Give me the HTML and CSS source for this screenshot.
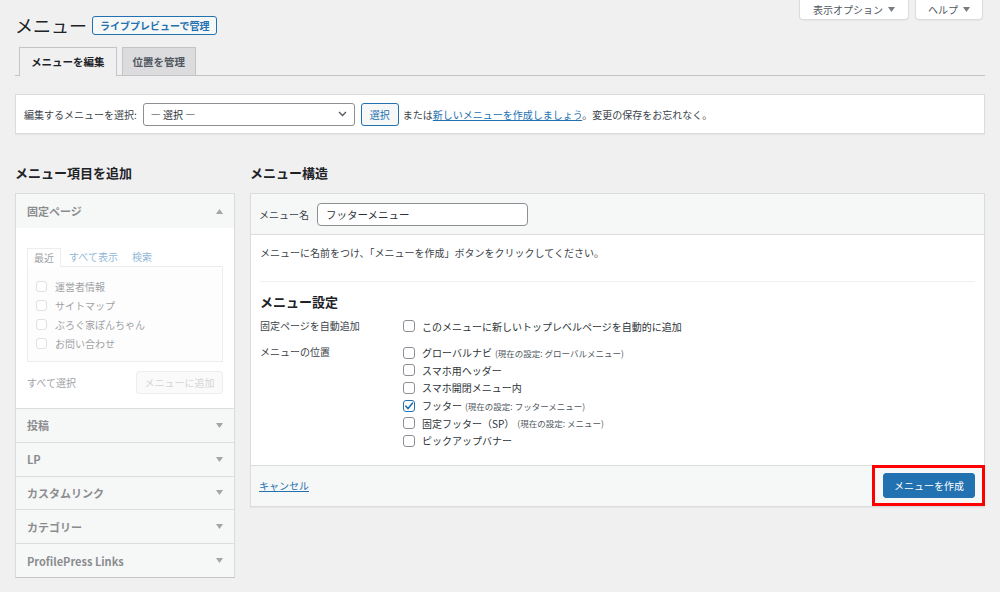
FILE: index.html
```html
<!DOCTYPE html>
<html lang="ja">
<head>
<meta charset="utf-8">
<title>メニュー</title>
<link rel="stylesheet" href="styles.css">
</head>
<body>
<div class="wrap">
  <div class="top">
    <div class="title-row">
      <h1 class="title">メニュー</h1>
      <a class="badge">ライブプレビューで管理</a>
    </div>
    <div class="meta">
      <button class="meta-btn">表示オプション <svg class="tri" width="7" height="5" viewBox="0 0 7 5"><polygon points="0,0 7,0 3.5,5"/></svg></button>
      <button class="meta-btn">ヘルプ <svg class="tri" width="7" height="5" viewBox="0 0 7 5"><polygon points="0,0 7,0 3.5,5"/></svg></button>
    </div>
  </div>

  <nav class="tabs">
    <a class="tab active">メニューを編集</a>
    <a class="tab">位置を管理</a>
  </nav>

  <div class="select-bar">
    <span class="sb-label">編集するメニューを選択:</span>
    <div class="select"><span>— 選択 —</span><svg width="9" height="6" viewBox="0 0 9 6"><path d="M1 1l3.5 3.5L8 1" fill="none" stroke="#50575e" stroke-width="1.3"/></svg></div>
    <button class="btn-sec">選択</button>
    <span class="sb-text">または<a class="link">新しいメニューを作成しましょう</a>。変更の保存をお忘れなく。</span>
  </div>

  <div class="columns">
    <div class="col-left">
      <h2 class="col-title">メニュー項目を追加</h2>
      <div class="acc">
        <div class="acc-head">
          <span class="faded acc-title">固定ページ</span>
          <svg class="faded arrow" width="7" height="5" viewBox="0 0 7 5"><polygon points="0,5 7,5 3.5,0"/></svg>
        </div>
        <div class="acc-body">
          <div class="faded">
            <div class="ptabs">
              <span class="ptab active">最近</span>
              <span class="ptab">すべて表示</span>
              <span class="ptab">検索</span>
            </div>
            <div class="plist">
              <div class="pitem"><span class="cb small"></span>運営者情報</div>
              <div class="pitem"><span class="cb small"></span>サイトマップ</div>
              <div class="pitem"><span class="cb small"></span>ぶろぐ家ぽんちゃん</div>
              <div class="pitem"><span class="cb small"></span>お問い合わせ</div>
            </div>
            <div class="add-row">
              <span class="sel-all">すべて選択</span>
              <button class="btn-add">メニューに追加</button>
            </div>
          </div>
        </div>
        <div class="acc-sec"><span class="faded acc-title">投稿</span><svg class="faded arrow" width="7" height="5" viewBox="0 0 7 5"><polygon points="0,0 7,0 3.5,5"/></svg></div>
        <div class="acc-sec"><span class="faded acc-title">LP</span><svg class="faded arrow" width="7" height="5" viewBox="0 0 7 5"><polygon points="0,0 7,0 3.5,5"/></svg></div>
        <div class="acc-sec"><span class="faded acc-title">カスタムリンク</span><svg class="faded arrow" width="7" height="5" viewBox="0 0 7 5"><polygon points="0,0 7,0 3.5,5"/></svg></div>
        <div class="acc-sec"><span class="faded acc-title">カテゴリー</span><svg class="faded arrow" width="7" height="5" viewBox="0 0 7 5"><polygon points="0,0 7,0 3.5,5"/></svg></div>
        <div class="acc-sec"><span class="faded acc-title">ProfilePress Links</span><svg class="faded arrow" width="7" height="5" viewBox="0 0 7 5"><polygon points="0,0 7,0 3.5,5"/></svg></div>
      </div>
    </div>

    <div class="col-right">
      <h2 class="col-title">メニュー構造</h2>
      <div class="menu-box">
        <div class="mb-head">
          <span>メニュー名</span>
          <div class="name-input">フッターメニュー</div>
        </div>
        <div class="mb-body">
          <p class="hint">メニューに名前をつけ、「メニューを作成」ボタンをクリックしてください。</p>
          <hr class="sep">
          <h3 class="set-title">メニュー設定</h3>
          <div class="set-row first">
            <div class="set-label">固定ページを自動追加</div>
            <div class="set-items">
              <div class="citem auto"><span class="cb"></span>このメニューに新しいトップレベルページを自動的に追加</div>
            </div>
          </div>
          <div class="set-row">
            <div class="set-label">メニューの位置</div>
            <div class="set-items">
              <div class="citem"><span class="cb"></span>グローバルナビ <span class="note">(現在の設定: グローバルメニュー)</span></div>
              <div class="citem"><span class="cb"></span>スマホ用ヘッダー</div>
              <div class="citem"><span class="cb"></span>スマホ開閉メニュー内</div>
              <div class="citem"><span class="cb checked"><svg width="10" height="10" viewBox="0 0 10 10"><path d="M1.8 5.2l2.3 2.4L8.4 2.2" fill="none" stroke="#2271b1" stroke-width="1.6" stroke-linecap="round" stroke-linejoin="round"/></svg></span>フッター <span class="note">(現在の設定: フッターメニュー)</span></div>
              <div class="citem"><span class="cb"></span>固定フッター（SP） <span class="note">(現在の設定: メニュー)</span></div>
              <div class="citem"><span class="cb"></span>ピックアップバナー</div>
            </div>
          </div>
        </div>
        <div class="mb-foot">
          <a class="link">キャンセル</a>
          <button class="btn-primary">メニューを作成</button>
          <div class="highlight"></div>
        </div>
      </div>
    </div>
  </div>
</div>
</body>
</html>
```

FILE: styles.css
```css
* { box-sizing: border-box; }

body {
  margin: 0;
  background: #f0f0f1;
  font-family: "Noto Sans CJK JP", "Noto Sans", sans-serif;
  font-size: 10px;
  color: #3c434a;
}

button { font-family: inherit; font-size: 10px; }

.wrap { padding: 0 15px; }

/* header */
.top {
  display: flex;
  justify-content: space-between;
  align-items: flex-start;
}
.title-row {
  display: flex;
  align-items: center;
  gap: 5px;
  padding-top: 14px;
  height: 37px;
}
.title {
  margin: 0;
  font-size: 18px;
  font-weight: 400;
  line-height: 23px;
  color: #1d2327;
}
.badge {
  border: 1px solid #2271b1;
  border-radius: 3px;
  background: #f6f7f7;
  color: #2271b1;
  font-size: 10px;
  font-weight: 700;
  line-height: 17px;
  padding: 0 7px;
}
.meta { display: flex; gap: 6px; margin-right: 2px; }
.meta-btn {
  height: 20px;
  display: flex;
  align-items: center;
  gap: 5px;
  padding: 0 13px;
  background: #fff;
  border: 1px solid #dcdcde;
  border-top: none;
  border-radius: 0 0 4px 4px;
  color: #50575e;
  box-shadow: 0 1px 1px rgba(0,0,0,.04);
}
.meta-btn + .meta-btn { padding: 0 12px; }
.tri { fill: #787c82; }

/* tabs */
.tabs {
  display: flex;
  align-items: flex-start;
  gap: 5px;
  height: 29px;
  margin-top: 10px;
  padding-left: 4px;
  border-bottom: 1px solid #c3c4c7;
}
.tab {
  height: 28px;
  line-height: 27px;
  padding: 0 10px;
  border: 1px solid #c3c4c7;
  border-bottom: none;
  background: #dcdcde;
  color: #50575e;
  font-size: 10.5px;
  font-weight: 700;
}
.tab.active {
  height: 29px;
  padding: 0 11px;
  background: #f0f0f1;
  color: #1d2327;
}

/* select bar */
.select-bar {
  margin-top: 18px;
  height: 40px;
  display: flex;
  align-items: center;
  padding: 0 8px;
  background: #fff;
  border: 1px solid #dcdcde;
  box-shadow: 0 1px 1px rgba(0,0,0,.04);
}
.sb-label { margin-right: 6px; }
.select {
  width: 212px;
  height: 23px;
  display: flex;
  align-items: center;
  justify-content: space-between;
  padding: 0 7px;
  border: 1px solid #8c8f94;
  border-radius: 3px;
  color: #2c3338;
}
.btn-sec {
  margin-left: 6px;
  height: 23px;
  padding: 0 8px;
  border: 1px solid #2271b1;
  border-radius: 3px;
  background: #f6f7f7;
  color: #2271b1;
}
.sb-text { margin-left: 4px; }
.link { color: #2271b1; text-decoration: underline; }

/* columns */
.columns {
  display: flex;
  align-items: flex-start;
  gap: 15px;
  margin-top: 30px;
}
.col-left { width: 220px; flex: none; }
.col-right { flex: 1; }
.col-title {
  margin: 0 0 11px;
  font-size: 13px;
  font-weight: 700;
  line-height: 18px;
  color: #1d2327;
}

/* left accordion */
.acc {
  background: #fff;
  border: 1px solid #dcdcde;
  border-bottom-color: #c3c4c7;
  box-shadow: 0 1px 1px rgba(0,0,0,.06);
}
.faded { opacity: .5; }
.acc-head, .acc-sec {
  display: flex;
  align-items: center;
  justify-content: space-between;
  padding: 0 11px;
  background: #f6f7f7;
}
.acc-head { height: 34px; }
.acc-sec { height: 33.8px; border-top: 1px solid #dcdcde; }
.acc-title { font-size: 11px; font-weight: 700; color: #1d2327; }
.arrow { fill: #50575e; }
.acc-body {
  height: 180px;
  padding: 20px 11px 0;
  background: #fff;
}
.ptabs { display: flex; }
.ptab {
  height: 18px;
  line-height: 17px;
  padding: 0 7px;
  color: #2271b1;
}
.ptab.active {
  color: #3c434a;
  border: 1px solid #dcdcde;
  border-bottom: none;
  background: #fff;
  position: relative;
  margin-bottom: -1px;
  margin-right: 1px;
  padding: 0 6px;
  height: 19px;
}
.plist {
  height: 96px;
  padding: 10px 8px 8px;
  border: 1px solid #dcdcde;
  background: #fcfcfc;
}
.pitem {
  height: 19px;
  display: flex;
  align-items: center;
  gap: 8px;
  color: #3c434a;
}
.add-row {
  display: flex;
  align-items: center;
  justify-content: space-between;
  margin-top: 9px;
}
.sel-all { color: #3c434a; }
.btn-add {
  height: 23px;
  width: 87px;
  padding: 0;
  border: 1px solid #dcdcde;
  border-radius: 3px;
  background: #f6f7f7;
  color: #a7aaad;
}

/* checkboxes */
.cb {
  width: 12px;
  height: 12px;
  flex: none;
  display: inline-flex;
  align-items: center;
  justify-content: center;
  border: 1px solid #8c8f94;
  border-radius: 3px;
  background: #fff;
}
.cb.small { width: 11px; height: 11px; border-color: #c3c4c7; }
.cb.checked { border-color: #2271b1; }

/* right menu box */
.menu-box {
  background: #fff;
  border: 1px solid #dcdcde;
  box-shadow: 0 1px 1px rgba(0,0,0,.04);
}
.mb-head {
  height: 41px;
  display: flex;
  align-items: center;
  gap: 8px;
  padding: 0 8px;
  background: #f6f7f7;
  border-bottom: 1px solid #dcdcde;
}
.name-input {
  width: 211px;
  height: 23px;
  display: flex;
  align-items: center;
  padding: 0 8px;
  border: 1px solid #8c8f94;
  border-radius: 4px;
  background: #fff;
  color: #2c3338;
  font-size: 10.5px;
}
.mb-body { padding: 10px 9px 15px; }
.hint { margin: 0; line-height: 16px; }
.sep {
  margin: 20px 0 0;
  border: 0;
  border-top: 1px solid #f0f0f1;
  height: 0;
}
.set-title {
  margin: 11px 0 7px;
  font-size: 13px;
  font-weight: 700;
  line-height: 18px;
  color: #1d2327;
}
.set-row { display: flex; }
.set-row.first { margin-bottom: 10px; }
.set-label { width: 143px; flex: none; line-height: 16px; }
.citem {
  height: 17.6px;
  display: flex;
  align-items: center;
  gap: 7px;
  color: #2c3338;
}
.citem.auto { height: 16px; }
.note { font-size: 8.5px; color: #50575e; margin-left: -4px; }

.mb-foot {
  position: relative;
  height: 41px;
  display: flex;
  align-items: center;
  justify-content: space-between;
  padding: 0 9px 0 8px;
  background: #f6f7f7;
  border-top: 1px solid #dcdcde;
}
.btn-primary {
  height: 25px;
  padding: 0 10px;
  border: 1px solid #2271b1;
  border-radius: 3px;
  background: #2271b1;
  color: #fff;
}
.highlight {
  position: absolute;
  top: -1px;
  right: -1px;
  width: 113px;
  height: 41px;
  border: 3px solid #ff0000;
}
```
